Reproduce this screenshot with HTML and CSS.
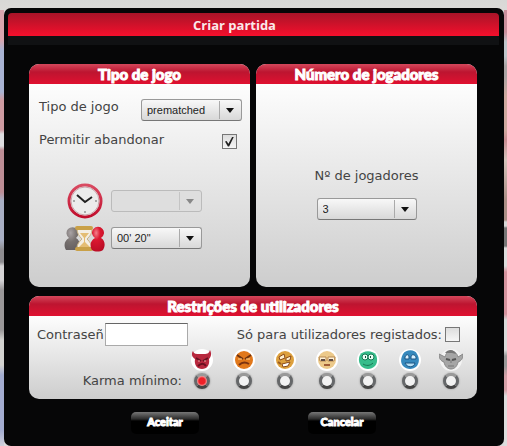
FILE: index.html
```html
<!DOCTYPE html>
<html lang="pt">
<head>
<meta charset="utf-8">
<title>Criar partida</title>
<link rel="stylesheet" href="styles.css">
</head>
<body>
<svg class="defs" aria-hidden="true">
  <defs>
    <linearGradient id="ring" x1="0" y1="0" x2="0" y2="1"><stop offset="0" stop-color="#d94a61"/><stop offset="1" stop-color="#c10d2c"/></linearGradient>
    <radialGradient id="redpawn" cx=".4" cy=".25" r=".8"><stop offset="0" stop-color="#f4808c"/><stop offset=".35" stop-color="#dc1830"/><stop offset="1" stop-color="#b90c25"/></radialGradient>
    <radialGradient id="greypawn" cx=".4" cy=".25" r=".8"><stop offset="0" stop-color="#a9a3a5"/><stop offset=".5" stop-color="#77716f"/><stop offset="1" stop-color="#655f60"/></radialGradient>
  </defs>
</svg>
<form class="dialog">
  <h1 class="dialog-title">Criar partida</h1>
  <div class="panels">
    <section class="panel game">
      <h2 class="panel-title">Tipo de jogo</h2>
      <div class="panel-body">
        <div class="row">
          <label for="type">Tipo de jogo</label>
          <span class="select type"><select id="type"><option>prematched</option></select></span>
        </div>
        <div class="row leave-row">
          <label for="leave">Permitir abandonar</label>
          <input class="check" type="checkbox" id="leave" checked>
        </div>
        <div class="timers">
          <svg class="clock" viewBox="0 0 36 36" aria-hidden="true">
            <circle cx="18" cy="18" r="16" fill="#ececec" stroke="url(#ring)" stroke-width="3"/>
            <circle cx="18" cy="18" r="14" fill="none" stroke="#c9a4aa" stroke-width="1"/>
            <path d="M10 12l8 7 7-5" fill="none" stroke="#222" stroke-width="2"/>
            <path d="M18 28v2M6 18h2M28 18h2" stroke="#aaa" stroke-width="2"/>
          </svg>
          <span class="select timer"><select aria-label="Tempo de jogo" disabled><option></option></select></span>
          <svg class="pawns" viewBox="0 0 42 28" aria-hidden="true">
            <path d="M2 26c-3-5-1-10 3-12a6 6 0 1 1 7 0c5 3 4 9 2 12z" fill="url(#greypawn)"/>
            <path d="M13 5h15c0 5-2 7-5 10 3 3 5 6 5 9H13c0-4 2-6 5-9-3-3-5-6-5-10z" fill="#f4eee2" stroke="#c9b385"/>
            <path d="M16 9h9l-4 5v4l5 5H15l5-5v-4z" fill="#e4bd73"/>
            <rect x="11" y="2" width="18" height="4" rx="2" fill="#c9a047"/>
            <rect x="11" y="23" width="18" height="4" rx="2" fill="#c9a047"/>
            <path d="M28 26c-3-5-1-10 3-12a6 6 0 1 1 6 0c5 3 4 9 2 12-3 2-8 2-11 0z" fill="url(#redpawn)"/>
          </svg>
          <span class="select timer"><select aria-label="Tempo por jogada"><option>00' 20"</option></select></span>
        </div>
      </div>
    </section>

    <section class="panel count">
      <h2 class="panel-title">Número de jogadores</h2>
      <div class="panel-body">
        <label for="players">Nº de jogadores</label>
        <span class="select players"><select id="players"><option>3</option></select></span>
      </div>
    </section>

    <section class="panel limits">
      <h2 class="panel-title">Restrições de utilizadores</h2>
      <div class="limits-row">
        <label for="pass">Contraseñ</label>
        <input class="pass" type="text" id="pass">
        <label class="registered" for="registered">Só para utilizadores registados:</label>
        <input class="check" type="checkbox" id="registered">
      </div>
      <div class="karma" role="radiogroup" aria-labelledby="karma-label">
        <span id="karma-label">Karma mínimo:</span>
        <div class="levels">
          <label class="level">
            <svg viewBox="0 0 24 24" aria-hidden="true"><circle cx="12" cy="12" r="11" fill="#fff"/><path d="M3 3c1 3 3 3 6 3h5c4 0 5-1 6-4 2 4 1 7-1 9 1 6-2 10-7 10S4 17 5 11C2 9 1 6 3 3z" fill="#b8283e"/><path d="M6 10l5 3M18 10l-5 3" stroke="#651323" stroke-width="2"/><path d="M8 18c3-3 6-3 8 0" fill="none" stroke="#6b1020" stroke-width="2"/><path d="M8 13h2M14 13h2" stroke="#f0a6a0"/></svg>
            <input type="radio" name="karma" aria-label="Karma 1" checked>
          </label>
          <label class="level">
            <svg viewBox="0 0 24 24" aria-hidden="true"><circle cx="12" cy="12" r="11" fill="#fff"/><circle cx="12" cy="12" r="9" fill="#e1781b"/><path d="M5 7l6 4M19 7l-6 4" stroke="#6e3210" stroke-width="2"/><path d="M6 11h4M14 11h4" stroke="#ffd08a"/><path d="M7 17c3-3 7-3 10-1" fill="none" stroke="#7c3310" stroke-width="2"/></svg>
            <input type="radio" name="karma" aria-label="Karma 2">
          </label>
          <label class="level">
            <svg viewBox="0 0 24 24" aria-hidden="true"><circle cx="12" cy="12" r="11" fill="#fff"/><circle cx="12" cy="12" r="9" fill="#dda03d"/><path d="M6 9l5-3 1 4-5 2zM13 10l5-2-1 4-4 1z" fill="#fff1cf" stroke="#8a4a19"/><path d="M9 16l8-2-2 4-5 1z" fill="#fff" stroke="#8a4a19"/><path d="M5 14l3 2" stroke="#9a5b20" stroke-width="2"/></svg>
            <input type="radio" name="karma" aria-label="Karma 3">
          </label>
          <label class="level">
            <svg viewBox="0 0 24 24" aria-hidden="true"><circle cx="12" cy="12" r="11" fill="#fff"/><circle cx="12" cy="12" r="9" fill="#ecc98a"/><path d="M4 9h7v4H5zM13 9h7l-1 4h-6z" fill="#fff3d8" stroke="#b78953"/><path d="M6 12h4M14 12h4" stroke="#5e4a42" stroke-width="2"/><path d="M9 17h6" stroke="#a05d38" stroke-width="2"/></svg>
            <input type="radio" name="karma" aria-label="Karma 4">
          </label>
          <label class="level">
            <svg viewBox="0 0 24 24" aria-hidden="true"><circle cx="12" cy="12" r="11" fill="#fff"/><path d="M4 7c3-5 13-5 16 0 2 4 1 9-1 11-4 4-10 4-14 0-2-3-3-7-1-11z" fill="#36bd8b"/><circle cx="9" cy="9" r="3" fill="#eafff5" stroke="#187653"/><circle cx="15" cy="9" r="3" fill="#eafff5" stroke="#187653"/><path d="M9 9h1M14 9h1" stroke="#164b3a" stroke-width="2"/><path d="M7 16c3 2 7 2 10-1" fill="none" stroke="#187653"/></svg>
            <input type="radio" name="karma" aria-label="Karma 5">
          </label>
          <label class="level">
            <svg viewBox="0 0 24 24" aria-hidden="true"><circle cx="12" cy="12" r="11" fill="#fff"/><path d="M5 6c3-5 12-5 14 0 3 5 2 9 0 12-4 4-10 4-14 0-3-4-2-8 0-12z" fill="#3689bd"/><path d="M7 9c1-3 4-3 4 0v2H7zM13 9c0-3 4-3 5 0v2h-5z" fill="#d9f1ff" stroke="#1c5583"/><path d="M7 15h10c-1 5-8 5-10 0z" fill="#b7e0f5" stroke="#1c5583"/></svg>
            <input type="radio" name="karma" aria-label="Karma 6">
          </label>
          <label class="level">
            <svg viewBox="0 0 24 24" aria-hidden="true"><circle cx="12" cy="12" r="11" fill="#f4f4f4"/><path d="M0 6l6 3c1-4 3-6 6-6s6 2 7 6l5-3c0 5-2 7-5 8-1 5-4 7-7 7s-6-2-7-7c-3-1-5-3-5-8z" fill="#a6a6a6" stroke="#888"/><path d="M6 5c3-4 9-4 11 1l-4-1z" fill="#777"/><path d="M7 11l4 1M17 11l-4 1" stroke="#555" stroke-width="2"/><path d="M12 12v3M9 18h6" stroke="#777"/></svg>
            <input type="radio" name="karma" aria-label="Karma 7">
          </label>
        </div>
      </div>
    </section>
  </div>
  <div class="actions">
    <button type="button">Aceitar</button>
    <button type="button">Cancelar</button>
  </div>
</form>
</body>
</html>
```
FILE: styles.css
```css
* {
  box-sizing: border-box;
}

body {
  margin: 0;
  padding: 8px 3px 0 4px;
  background:
    linear-gradient(#d8d8d6, #dcdad8) top / 100% 10px no-repeat,
    linear-gradient(#d9a5ae 0 40px, #a9b3d2 50px 92px, #cf9ba2 100px 130px, #dcdcdf 134px 146px, #bd8e96 150px 192px, #a9afc4 200px 240px, #8e8c90 250px 262px, #d6d4d6 266px 280px, #9a9799 290px 330px, #d3d2d0 340px 365px, #a3acd0 375px 430px, #d0d0da) left / 4px 100% no-repeat,
    linear-gradient(#c98f9c 0 32px, #bfc6cb 42px 56px, #aaa4a4 66px 76px, #cfa99f 96px 130px, #c98d92 140px, #d5c4bc 160px, #ab8f86 200px 220px, #d8d8d8 222px 226px, #777 228px 246px, #ddd 248px 266px, #d5939e 272px 314px, #dadada 320px 350px, #999 356px 366px, #d5a0a8 376px 390px, #ddd 396px) right / 3px 100% no-repeat,
    #dadada;
  font: 13px/16px "DejaVu Sans", sans-serif;
  color: #444;
}

.defs {
  position: absolute;
  width: 0;
  height: 0;
}

.dialog {
  padding: 5px 5px 12px 4px;
  border-radius: 7px;
  background: #060607;
}

.dialog-title {
  margin: 0;
  padding: 1px 38px 0 0;
  border-radius: 4px 4px 0 0;
  background: linear-gradient(#a81428, #f50f2c);
  box-shadow: 0 9px 0 #101113;
  color: #fbe9ea;
  font: bold 13px/22px "Open Sans", sans-serif;
  text-align: center;
}

.panels {
  display: grid;
  grid-template-columns: 1fr 1fr;
  gap: 9px 6px;
  margin: 28px 22px 0 21px;
}

.panel {
  border-radius: 10px;
  background: linear-gradient(#fdfdfd 20px, #cdcdcd);
  overflow: hidden;
}

.panel-title {
  margin: 0;
  background: linear-gradient(#d4475b, #bd1530 40%, #e01030);
  color: #fff;
  font: 900 15px/20px Lato, sans-serif;
  -webkit-text-stroke: 1px #fff;
  text-align: center;
}

.game .panel-body {
  padding: 15px 8px 35px 10px;
}

.row {
  display: flex;
  justify-content: space-between;
}

.leave-row {
  padding: 11px 5px 0 0;
}

.select {
  position: relative;
  display: block;
  height: 22px;
}

.select select {
  appearance: none;
  width: 100%;
  height: 100%;
  padding: 0 24px 0 5px;
  border: 1px solid #999;
  border-bottom-color: #777;
  border-radius: 3px;
  background: linear-gradient(#f8f8f8, #d8d8d8);
  color: #222;
  font: 11px/20px "Liberation Sans", sans-serif;
}

.select::before {
  content: "";
  position: absolute;
  top: 2px;
  right: 22px;
  bottom: 2px;
  border-left: 1px solid #aaa;
}

.select::after {
  content: "";
  position: absolute;
  top: 9px;
  right: 8px;
  border: solid transparent;
  border-width: 5px 4px 0;
  border-top-color: #111;
}

.select select:disabled {
  border-color: #bbb;
  background: #dedede;
  opacity: 1;
}

.select:has(:disabled)::before {
  border-color: #c4c4c4;
}

.select:has(:disabled)::after {
  border-top-color: #888;
}

.type {
  width: 101px;
}

.players {
  width: 100px;
  margin-top: 14px;
}

.check {
  appearance: none;
  display: grid;
  place-items: center;
  width: 15px;
  height: 15px;
  margin: 0;
  border: 1px solid #777;
  background: linear-gradient(#ddd, #f6f6f6);
}

.leave-row .check {
  margin-top: 2px;
}

.check:checked::before {
  content: "";
  width: 9px;
  height: 10px;
  background: #222;
  clip-path: polygon(0 50%, 18% 45%, 38% 72%, 82% 0, 100% 0, 46% 100%, 32% 100%);
}

.timers {
  display: grid;
  grid-template-columns: 42px 91px;
  gap: 5px 5px;
  align-items: center;
  margin: 34px 0 0 25px;
}

.clock {
  width: 36px;
  height: 36px;
  justify-self: center;
}

.pawns {
  width: 42px;
  height: 28px;
}

.count .panel-body {
  display: flex;
  flex-direction: column;
  align-items: center;
  padding-top: 84px;
}

.limits {
  grid-column: 1 / -1;
}

.limits-row {
  display: flex;
  align-items: center;
  padding: 7px 17px 0 8px;
}

.pass {
  width: 83px;
  height: 23px;
  margin-left: 1px;
  border: 1px solid #aaa;
  border-top-color: #666;
  background: #fff;
}

.registered {
  margin-left: auto;
  margin-right: 3px;
}

.karma {
  display: flex;
  align-items: flex-end;
  justify-content: flex-end;
  padding: 2px 14px 10px 0;
}

.levels {
  display: flex;
  justify-content: space-between;
  width: 273px;
  margin-left: 8px;
}

.level {
  display: flex;
  flex-direction: column;
  align-items: center;
  gap: 1px;
}

.level svg {
  width: 24px;
  height: 24px;
}

.level input {
  appearance: none;
  width: 16px;
  height: 16px;
  margin: 0;
  border: 3px solid #66686a;
  border-top-color: #999;
  border-bottom-color: #444;
  border-radius: 50%;
  background: #f2f2f2;
  box-shadow: 0 0 2px #888;
}

.level input:checked {
  background: radial-gradient(#ee2028 3px, #f4a0a0 5px);
}

.actions {
  display: flex;
  justify-content: center;
  gap: 109px;
  margin: 13px 0 0;
}

.actions button {
  width: 68px;
  height: 22px;
  padding: 0 0 3px;
  border: 0;
  border-radius: 5px;
  background: linear-gradient(#777, #2c2c2c 7px, #000 9px);
  color: #fff;
  font: 900 11px/18px Lato, sans-serif;
  -webkit-text-stroke: 1px #fff;
}
```
